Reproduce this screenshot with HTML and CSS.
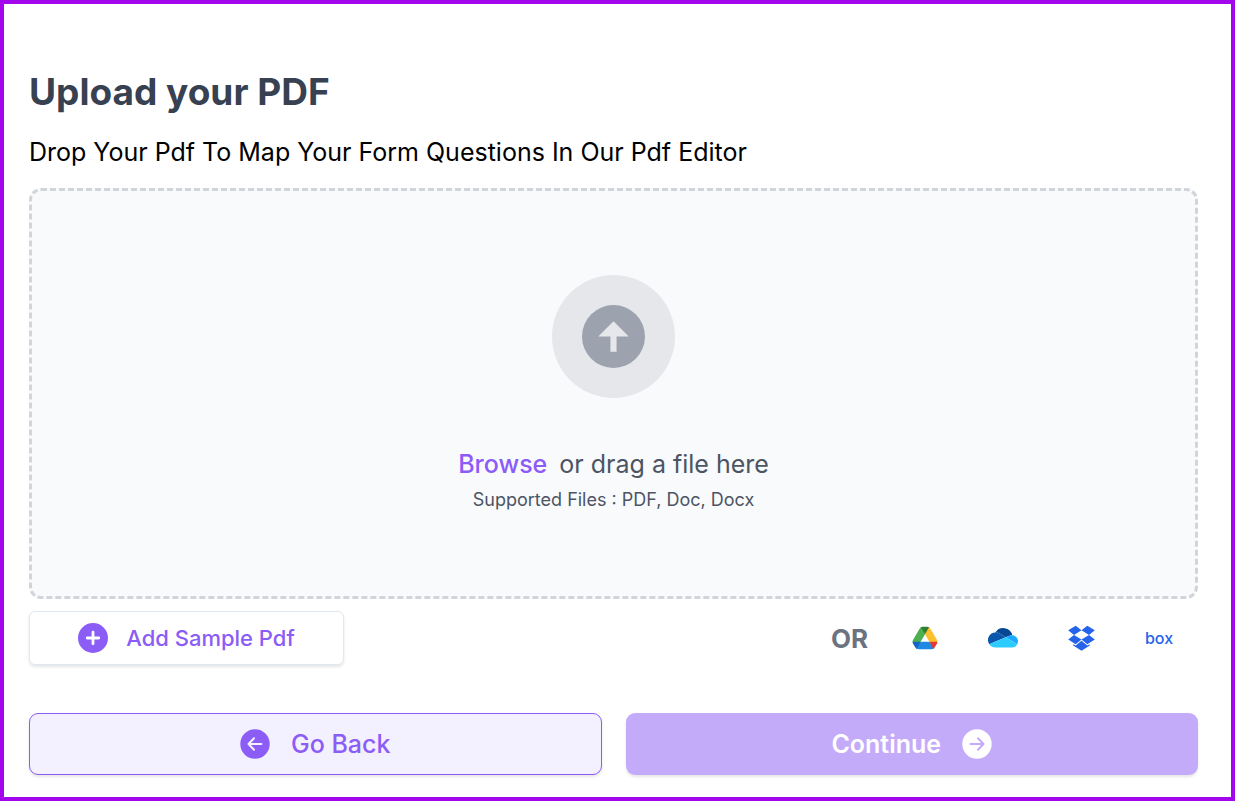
FILE: index.html
```html
<!DOCTYPE html>
<html lang="en">
<head>
    <meta charset="UTF-8">
    <title>Upload your PDF</title>
    <meta name="viewport" content="width=device-width, initial-scale=1.0">
    <link rel="stylesheet" href="styles.css">
</head>
<body>
    <main class="upload">
        <h1>Upload your PDF</h1>
        <p class="subtitle">Drop Your Pdf To Map Your Form Questions In Our Pdf Editor</p>

        <!-- Drop area -->
        <section class="dropzone">
            <div class="drop-icon">
                <svg viewBox="0 0 62 62" width="63" height="63">
                    <circle cx="31" cy="31" r="31" fill="#9ca3af"/>
                    <path d="M31 16L46 31H34V46H28V31H16Z" fill="#e5e7eb"/>
                </svg>
            </div>
            <p class="drop-text"><button type="button" class="browse">Browse</button> or drag a file here</p>
            <p class="drop-hint">Supported Files : PDF, Doc, Docx</p>
        </section>

        <!-- Sample file and cloud sources -->
        <div class="sources">
            <button type="button" class="sample-btn">
                <svg viewBox="0 0 30 30" width="30" height="30">
                    <circle cx="15" cy="15" r="15" fill="#8b5cf6"/>
                    <path d="M15 9.200V20.800M9.200 15H20.800" stroke="#fff" stroke-width="2.800" stroke-linecap="round"/>
                </svg>
                Add Sample Pdf
            </button>
            <div class="cloud">
                <span class="or">OR</span>
                <div class="cloud-list">
                    <button type="button" class="cloud-btn" aria-label="Google Drive">
                        <svg viewBox="0 0 48 48" width="30" height="30">
                            <path fill="#1e88e5" d="M38.59,39c-0.535,0.93-0.298,1.68-1.195,2.197C36.498,41.715,35.465,42,34.39,42H13.61c-1.074,0-2.106-0.285-3.004-0.802C9.708,40.681,9.945,39.93,9.41,39l7.67-9h13.84L38.59,39z"/>
                            <path fill="#fbc02d" d="M27.463,6.999c1.073-0.002,2.104-0.716,3.001-0.198c0.897,0.519,1.66,1.27,2.197,2.201l10.39,17.996c0.537,0.93,0.807,1.967,0.808,3.002c0.001,1.037-1.267,2.073-1.806,3.001l-11.127-3.005l-6.924-11.993L27.463,6.999z"/>
                            <path fill="#e53935" d="M43.86,30c0,1.04-0.27,2.07-0.81,3l-3.67,6.35c-0.53,0.78-1.21,1.4-1.99,1.85L30.92,30H43.86z"/>
                            <path fill="#4caf50" d="M5.947,33.001c-0.538-0.928-1.806-1.964-1.806-3c0.001-1.036,0.27-2.073,0.808-3.004l10.39-17.996c0.537-0.93,1.3-1.682,2.196-2.2c0.897-0.519,1.929,0.195,3.002,0.197l3.459,11.009l-6.922,11.989L5.947,33.001z"/>
                            <path fill="#1565c0" d="M17.08,30l-6.47,11.2c-0.78-0.45-1.46-1.07-1.99-1.85L4.95,33c-0.54-0.93-0.81-1.96-0.81-3H17.08z"/>
                            <path fill="#2e7d32" d="M30.46,6.8L24,18L17.53,6.8c0.78-0.45,1.66-0.73,2.6-0.79L27.46,6C28.54,6,29.57,6.28,30.46,6.8z"/>
                        </svg>
                    </button>
                    <button type="button" class="cloud-btn" aria-label="OneDrive">
                        <svg viewBox="0 0 32 32" width="30" height="30">
                            <path fill="#074793" d="M12.2,11.19l6.72,4.03,4-1.69A6.48,6.48,0,0,1,25.5,13l.44.02a10,10,0,0,0-18.04-3.02L8,10A7.96,7.96,0,0,1,12.2,11.19Z"/>
                            <path fill="#0a57ac" d="M12.2,11.19A7.96,7.96,0,0,0,8,10l-.1,0A8,8,0,0,0,1.44,22.57l5.92-2.49,2.63-1.11,5.87-2.47,3.06-1.28Z"/>
                            <path fill="#1aaaff" d="M25.94,13.02L25.5,13a6.48,6.48,0,0,0-2.58.53l-4,1.69,12.3,7.37a6.5,6.5,0,0,0-5.28-9.57Z"/>
                            <path fill="#2cccff" d="M31.22,22.59L18.92,15.22l-3.06,1.28L1.44,22.57A7.99,7.99,0,0,0,8,26H25.5a6.5,6.5,0,0,0,5.72-3.41Z"/>
                        </svg>
                    </button>
                    <button type="button" class="cloud-btn" aria-label="Dropbox">
                        <svg viewBox="0 0 30 30" width="30" height="30">
                            <path fill="#2563eb" d="M9.700 2.700L15.500 7.300L8 11.900L2.200 7.300ZM21.300 2.700L28.800 7.300L23 11.900L15.500 7.300ZM8 11.900L15.500 16.500L9.700 21.300L2.200 16.500ZM23 11.900L28.800 16.500L21.300 21.300L15.500 16.500ZM15.500 17.800L21.300 22.600L23.800 21.200V22.600L15.500 27.800L7.200 22.600V21.200L9.700 22.600Z"/>
                        </svg>
                    </button>
                    <button type="button" class="cloud-btn box-logo" aria-label="Box">box</button>
                </div>
            </div>
        </div>

        <!-- Navigation -->
        <div class="actions">
            <button type="button" class="action-btn back-btn">
                <svg viewBox="0 0 30 30" width="30" height="30">
                    <circle cx="15" cy="15" r="14.700" fill="#8b5cf6"/>
                    <path d="M21.500 15H8.500M14 9.200L8.500 15L14 20.800" fill="none" stroke="#f3f0ff" stroke-width="2" stroke-linecap="round" stroke-linejoin="round"/>
                </svg>
                Go Back
            </button>
            <button type="button" class="action-btn continue-btn">
                Continue
                <svg viewBox="0 0 30 30" width="30" height="30">
                    <circle cx="15" cy="15" r="14.700" fill="#fff"/>
                    <path d="M8.500 15H21.500M16 9.200L21.500 15L16 20.800" fill="none" stroke="#c4abfa" stroke-width="2" stroke-linecap="round" stroke-linejoin="round"/>
                </svg>
            </button>
        </div>
    </main>
</body>
</html>
```
FILE: styles.css
```css
* {
    box-sizing: border-box;
}

body {
    margin: 0;
    min-height: 100vh;
    border: 4px solid #a305ed;
    background-color: #fff;
    color: #000;
    font-family: Inter, "Open Sans", sans-serif;
}

h1,
p {
    margin: 0;
}

button {
    padding: 0;
    border: none;
    background: none;
    font-family: inherit;
    cursor: pointer;
}

svg {
    display: block;
    flex-shrink: 0;
}

.upload {
    display: flex;
    flex-direction: column;
    padding: 61px 33px 22px 25px;
}

h1 {
    color: #374151;
    font-size: 37px;
    font-weight: 700;
    line-height: 54px;
}

.subtitle {
    margin-top: 15px;
    font-size: 25px;
    line-height: 36px;
}

/* Drop area */
.dropzone {
    display: flex;
    flex-direction: column;
    align-items: center;
    margin-top: 18px;
    padding: 84px 20px 81px;
    border: 3px dashed #d1d5db;
    border-radius: 12px;
    background-color: #f9fafc;
    color: #4b5563;
}

.drop-icon {
    display: flex;
    align-items: center;
    justify-content: center;
    width: 123px;
    height: 123px;
    border-radius: 50%;
    background-color: #e5e7eb;
}

.drop-text {
    margin-top: 48px;
    font-size: 25px;
    line-height: 36px;
}

.browse {
    margin-right: 5px;
    color: #8b5cf6;
    font-size: 25px;
    font-weight: 500;
    line-height: 36px;
}

.drop-hint {
    margin-top: 3px;
    font-size: 18px;
    line-height: 30px;
}

/* Sample file and cloud sources */
.sources {
    display: flex;
    align-items: center;
    justify-content: space-between;
    margin-top: 12px;
}

.sample-btn {
    display: flex;
    align-items: center;
    justify-content: center;
    gap: 18px;
    width: 315px;
    height: 54px;
    border: 1px solid #e2e8f0;
    border-radius: 6px;
    background-color: #fff;
    box-shadow: 0 2px 3px rgba(0, 0, 0, 0.1);
    color: #8b5cf6;
    font-size: 22px;
    font-weight: 500;
}

.cloud {
    display: flex;
    align-items: center;
    gap: 42px;
    padding-right: 24px;
}

.or {
    color: #6b7280;
    font-size: 26px;
    font-weight: 700;
}

.cloud-list {
    display: flex;
    align-items: center;
    gap: 48px;
}

.cloud-btn {
    width: 30px;
    height: 30px;
}

.box-logo {
    color: #2563eb;
    font-size: 16px;
    font-weight: 500;
    line-height: 30px;
}

/* Navigation */
.actions {
    display: grid;
    grid-template-columns: 1fr 1fr;
    gap: 24px;
    margin-top: 48px;
}

.action-btn {
    display: flex;
    align-items: center;
    justify-content: center;
    gap: 21px;
    height: 62px;
    border-radius: 9px;
    box-shadow: 0 2px 3px rgba(0, 0, 0, 0.1);
    font-size: 25px;
    font-weight: 500;
}

.back-btn {
    border: 1px solid #8b5cf6;
    background-color: #f3f0ff;
    color: #8b5cf6;
}

.continue-btn {
    background-color: #c4abfa;
    color: #fff;
    font-weight: 600;
}
```
